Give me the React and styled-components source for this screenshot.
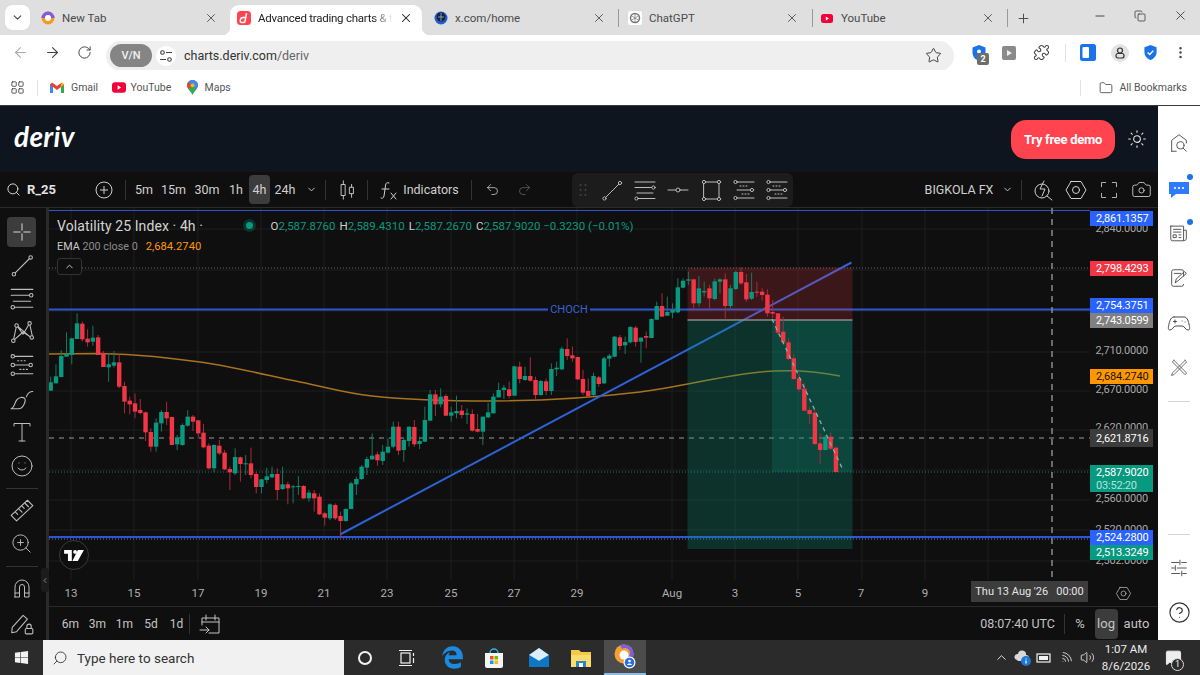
import React from "react";
import styled, { createGlobalStyle } from "styled-components";
import {
  ArrowLeft,
  ArrowRight,
  Camera,
  ChevronDown,
  ChevronLeft,
  ChevronUp,
  CircleHelp,
  Copy,
  Folder,
  LayoutGrid,
  Minus,
  MoreVertical,
  Plus,
  Puzzle,
  RotateCw,
  Search,
  Star,
  Sun,
  Undo2,
  Redo2,
  X,
  ZoomIn,
  Smile,
  Volume2,
  Wifi,
  MessageSquare,
} from "lucide-react";
import { FaEdgeLegacy, FaWindows } from "react-icons/fa";

const UI_FONT = `"Roboto", "Open Sans", sans-serif`;
const CHART_BG = "#0f0f0f";
const GREEN = "#089981";
const RED = "#f23645";

const GlobalStyle = createGlobalStyle`
  html, body { margin: 0; padding: 0; background: #fff; }
  * { box-sizing: border-box; }
  body { font-family: ${UI_FONT}; }
`;

const Page = styled.div`
  width: 1200px;
  height: 675px;
  display: flex;
  flex-direction: column;
  overflow: hidden;
`;

/* browser chrome */
const TabStrip = styled.div`
  height: 35px;
  background: #dfdfdf;
  display: flex;
  align-items: flex-end;
  padding-left: 5px;
  color: #444;
`;

const TabListButton = styled.div`
  width: 25px;
  height: 25px;
  margin: 0 3px 5px 0;
  background: #fff;
  border-radius: 8px;
  display: flex;
  align-items: center;
  justify-content: center;
  flex: none;
`;

const Tab = styled.div`
  width: ${(p) => p.$w}px;
  height: 30px;
  padding: 0 ${(p) => p.$pr || 12}px 4px ${(p) => p.$pl}px;
  display: flex;
  align-items: center;
  flex: none;
  font-size: 11.5px;
  color: ${(p) => (p.$active ? "#222" : "#4a4a4a")};
  background: ${(p) => (p.$active ? "#fff" : "transparent")};
  border-radius: 9px 9px 0 0;
  white-space: nowrap;
  position: relative;
  ${(p) =>
    p.$active &&
    `
    &::before, &::after {
      content: "";
      position: absolute;
      bottom: 0;
      width: 8px;
      height: 8px;
    }
    &::before { left: -8px; background: radial-gradient(circle at 0 0, #dfdfdf 8px, #fff 8.5px); }
    &::after { right: -8px; background: radial-gradient(circle at 100% 0, #dfdfdf 8px, #fff 8.5px); }
  `}
`;

const TabFavicon = styled.span`
  width: 14px;
  height: 14px;
  margin-right: 7px;
  flex: none;
  display: flex;
  align-items: center;
  justify-content: center;
`;

const TabTitle = styled.span`
  flex: 1;
  overflow: hidden;
  ${(p) =>
    p.$fade &&
    `letter-spacing: -0.25px; -webkit-mask-image: linear-gradient(90deg, #000 85%, transparent);`}
`;

const TabClose = styled(X)`
  flex: none;
  margin-left: ${(p) => (p.$gap ? 6 : 0)}px;
`;

const TabSep = styled.span`
  width: 1px;
  height: 18px;
  margin-bottom: 8px;
  background: #9a9a9a;
  flex: none;
`;

const NewTabButton = styled.span`
  width: 30px;
  height: 30px;
  padding-bottom: 4px;
  display: flex;
  align-items: center;
  justify-content: center;
  flex: none;
`;

const WindowControls = styled.div`
  margin-left: auto;
  display: flex;
  height: 35px;
  align-items: center;
  padding-bottom: 4px;
  color: #333;
`;

const WindowButton = styled.span`
  width: 40px;
  display: flex;
  justify-content: center;
`;

const AddressRow = styled.div`
  height: 35px;
  background: #fff;
  border-radius: 9px 9px 0 0;
  display: flex;
  align-items: center;
  color: #444;
`;

const NavButton = styled.span`
  width: 32px;
  margin-left: ${(p) => p.$ml || 0}px;
  display: flex;
  justify-content: center;
  color: ${(p) => p.$color || "#444"};
`;

const AddressPill = styled.div`
  width: 848px;
  height: 30px;
  margin: 6px 0 0 6px;
  border-radius: 15px;
  background: #efefef;
  display: flex;
  align-items: center;
  padding-left: 4px;
  font-size: 12.5px;
  color: #333;
`;

const VpnBadge = styled.span`
  width: 42px;
  height: 23px;
  border-radius: 12px;
  background: #858585;
  color: #f2f2f2;
  font-size: 11px;
  font-weight: 500;
  display: flex;
  align-items: center;
  justify-content: center;
`;

const SiteInfo = styled.span`
  width: 20px;
  height: 20px;
  margin: 0 8px 0 4px;
  border-radius: 50%;
  background: #fff;
  display: flex;
  align-items: center;
  justify-content: center;
`;

const UrlMuted = styled.span`
  color: #666;
`;

const StarSlot = styled.span`
  margin-left: auto;
  padding-right: 12px;
  display: flex;
`;

const ExtSlot = styled.span`
  width: ${(p) => p.$w || 32}px;
  margin-left: ${(p) => p.$ml || 0}px;
  display: flex;
  justify-content: center;
  position: relative;
`;

const ExtBadge = styled.span`
  position: absolute;
  right: 3px;
  top: 8px;
  width: 12px;
  height: 12px;
  border-radius: 2px;
  background: #6e6e6e;
  color: #fff;
  font-size: 9px;
  font-weight: 700;
  line-height: 12px;
  text-align: center;
`;

const ToolbarSep = styled.span`
  width: 1px;
  height: ${(p) => p.$h || 18}px;
  background: #e1e1e1;
  flex: none;
  margin: ${(p) => p.$m || "0"};
`;

const ProfileDot = styled.span`
  width: 18px;
  height: 18px;
  border-radius: 50%;
  background: #e3e3e3;
  display: flex;
  align-items: center;
  justify-content: center;
`;

const BookmarkRow = styled.div`
  height: 35px;
  padding: 0 13px 0 10px;
  background: #fff;
  display: flex;
  align-items: center;
  font-size: 10.5px;
  color: #555;
`;

const Bookmark = styled.span`
  width: ${(p) => p.$w}px;
  display: flex;
  align-items: center;
  gap: ${(p) => p.$gap || 7}px;
  flex: none;
`;

const AllBookmarks = styled.span`
  margin-left: auto;
  display: flex;
  align-items: center;
  gap: 6px;
`;

/* deriv page */
const Body = styled.div`
  flex: 1;
  display: flex;
  min-height: 0;
  border-top: 1px solid #3a3a3a;
`;

const Main = styled.div`
  width: 1158px;
  display: flex;
  flex-direction: column;
`;

const DerivHeader = styled.header`
  height: 66px;
  background: #0e151e;
  display: flex;
  align-items: center;
  padding-left: 14px;
`;

const DerivLogo = styled.span`
  font-family: "Lato", sans-serif;
  font-style: italic;
  font-weight: 700;
  font-size: 28px;
  color: #fff;
  letter-spacing: 0.3px;
  line-height: 1;
  margin-top: -6px;
`;

const DemoButton = styled.button`
  margin-left: auto;
  width: 104px;
  height: 39px;
  border: 0;
  border-radius: 15px;
  background: #ff444f;
  color: #fff;
  font-family: ${UI_FONT};
  font-weight: 700;
  font-size: 13px;
  letter-spacing: -0.3px;
`;

const ThemeToggle = styled.span`
  width: 43px;
  display: flex;
  justify-content: center;
  color: #e8e8e8;
`;

const ChartToolbar = styled.div`
  height: 35px;
  background: ${CHART_BG};
  display: flex;
  align-items: center;
  color: #d0d0d0;
  font-size: 12.5px;
  border-bottom: 1px solid #2a2a2a;
  box-sizing: content-box;
`;

const SymbolSearch = styled.div`
  width: 92px;
  padding-left: 6px;
  flex: none;
  display: flex;
  align-items: center;
  gap: 6px;
  font-weight: 700;
  color: #e2e2e2;
  font-size: 13px;
`;

const ToolSlot = styled.span`
  width: ${(p) => p.$w}px;
  height: 29px;
  margin: ${(p) => p.$m || "0"};
  display: flex;
  align-items: center;
  justify-content: center;
  flex: none;
  white-space: nowrap;
  border-radius: 4px;
  background: ${(p) => (p.$active ? "#3c3c3c" : "transparent")};
`;

const BarSep = styled.span`
  width: 1px;
  height: 20px;
  background: #333;
  flex: none;
  margin: ${(p) => p.$m || "0"};
`;

const DrawPalette = styled.div`
  width: 221px;
  height: 34px;
  margin-left: 36px;
  background: #1c1c1c;
  border-radius: 6px;
  display: flex;
  align-items: center;
  flex: none;
  padding-left: 5px;
  color: #bdbdbd;
`;

const PaletteGrip = styled.span`
  width: 11px;
  margin-right: 7px;
  display: flex;
  justify-content: center;
  color: #444;
`;

const PaletteSlot = styled.span`
  width: 33px;
  display: flex;
  justify-content: center;
`;

const Workspace = styled.div`
  flex: 1;
  display: flex;
  min-height: 0;
`;

const ToolRail = styled.aside`
  width: 49px;
  flex: none;
  padding: 9px 3px 0 0;
  background: ${CHART_BG};
  border-right: 3px solid #2a2a2a;
  display: flex;
  flex-direction: column;
  align-items: center;
  position: relative;
  color: #bdbdbd;
`;

const RailActive = styled.span`
  width: 29px;
  height: 30px;
  margin-bottom: 1px;
  border-radius: 4px;
  background: #3c3c3c;
  display: flex;
  align-items: center;
  justify-content: center;
  color: #e6e6e6;
`;

const RailItem = styled.span`
  height: ${(p) => p.$h || 33.5}px;
  display: flex;
  align-items: center;
  justify-content: center;
`;

const RailSep = styled.span`
  width: 32px;
  height: 1px;
  margin: 5px 0;
  background: #333;
  flex: none;
`;

const CollapseHandle = styled.span`
  position: absolute;
  right: -3px;
  top: 360px;
  width: 8px;
  height: 24px;
  background: #1c1c1c;
  border-radius: 3px;
  display: flex;
  align-items: center;
  justify-content: center;
  color: #bbb;
`;

const ChartColumn = styled.div`
  flex: 1;
  display: flex;
  flex-direction: column;
  min-width: 0;
  background: ${CHART_BG};
`;

const ChartCanvas = styled.div`
  height: 372px;
  position: relative;
  overflow: hidden;
`;

const ChartSvg = styled.svg`
  display: block;
`;

const Legend = styled.div`
  position: absolute;
  left: 8px;
  top: 7px;
  color: #d4d4d4;
`;

const LegendTop = styled.div`
  height: 21px;
  display: flex;
  align-items: center;
  font-size: 14px;
`;

const LegendTitle = styled.span`
  width: 188.5px;
  white-space: nowrap;
  letter-spacing: 0.1px;
`;

const LiveDot = styled.span`
  width: 7px;
  height: 7px;
  margin-right: 18px;
  border-radius: 50%;
  background: ${GREEN};
  box-shadow: 0 0 0 3px rgba(8, 153, 129, 0.25);
`;

const Ohlc = styled.span`
  font-size: 11.5px;
  color: ${GREEN};
  white-space: nowrap;
`;

const OhlcKey = styled.b`
  font-weight: 400;
  color: #cfcfcf;
  margin-left: ${(p) => (p.$first ? 0 : 4)}px;
`;

const EmaRow = styled.div`
  height: 20px;
  display: flex;
  align-items: center;
  gap: 8px;
  font-size: 10.8px;
  color: #8d8d8d;
`;

const EmaName = styled.span`
  color: #c9c9c9;
`;

const EmaValue = styled.span`
  color: #ff9800;
  font-size: 11.2px;
`;

const LegendToggle = styled.span`
  width: 25px;
  height: 17px;
  margin-top: 2px;
  border: 1px solid #333;
  border-radius: 3px;
  background: ${CHART_BG};
  display: flex;
  align-items: center;
  justify-content: center;
  color: #d0d0d0;
`;

const ChochLabel = styled.span`
  position: absolute;
  left: 499px;
  top: 94px;
  width: 42px;
  height: 15px;
  background: ${CHART_BG};
  color: #3b62d6;
  font-size: 11px;
  line-height: 15px;
  text-align: center;
`;

const TvBadge = styled.span`
  position: absolute;
  left: 10px;
  top: 332px;
  width: 30px;
  height: 30px;
  border-radius: 50%;
  border: 1px solid #3a3a3a;
  background: ${CHART_BG};
  display: flex;
  align-items: center;
  justify-content: center;
`;

const AxisLabel = styled.span`
  position: absolute;
  right: 10px;
  top: ${(p) => p.$y - 208 - 7}px;
  font-size: 11px;
  letter-spacing: -0.2px;
  line-height: 14px;
  color: #a8a8a8;
`;

const PriceTag = styled.span`
  position: absolute;
  right: 5px;
  top: ${(p) => p.$y - 208}px;
  width: 63px;
  height: ${(p) => p.$h || 15}px;
  padding-left: 6px;
  background: ${(p) => p.$bg};
  color: ${(p) => p.$fg || "#fff"};
  font-size: 11px;
  letter-spacing: -0.2px;
  line-height: 13px;
  display: flex;
  flex-direction: column;
  justify-content: center;
  align-items: flex-start;
`;

const TagSub = styled.span`
  color: #b6e3d9;
`;

const TimeAxis = styled.div`
  height: 27px;
  position: relative;
  border-bottom: 1px solid #2a2a2a;
  font-size: 11.5px;
  color: #b0b0b0;
`;

const TimeTick = styled.span`
  position: absolute;
  left: ${(p) => p.$x - 49}px;
  top: 6px;
  transform: translateX(-50%);
  line-height: 14px;
`;

const TimeCursor = styled.span`
  position: absolute;
  left: 922px;
  top: 1px;
  width: 117px;
  height: 21px;
  background: #3c3c3c;
  color: #e4e4e4;
  font-size: 11px;
  line-height: 21px;
  text-align: center;
  white-space: pre;
`;

const AxisSettings = styled.span`
  position: absolute;
  left: 1066px;
  top: 5px;
  color: #c4c4c4;
  display: flex;
`;

const RangeBar = styled.div`
  flex: 1;
  display: flex;
  align-items: center;
  padding-left: 8px;
  color: #c4c4c4;
  font-size: 12px;
`;

const RangeItem = styled.span`
  width: ${(p) => p.$w}px;
  text-align: center;
`;

const ClockText = styled.span`
  margin-left: auto;
  width: 76px;
  text-align: right;
  white-space: nowrap;
  font-size: 12.5px;
`;

const ScaleSwitch = styled.span`
  width: ${(p) => p.$w}px;
  height: 30px;
  margin: ${(p) => p.$m || "0"};
  border-radius: 4px;
  background: ${(p) => (p.$active ? "#3c3c3c" : "transparent")};
  display: flex;
  align-items: center;
  justify-content: center;
  font-size: 13px;
  flex: none;
`;

const SideBar = styled.aside`
  width: 42px;
  padding: 14px 0 5px;
  background: #fff;
  display: flex;
  flex-direction: column;
  align-items: center;
  color: #4a4a4a;
`;

const SideItem = styled.span`
  height: 45px;
  display: flex;
  align-items: center;
  justify-content: center;
  flex: none;
  position: relative;
`;

const SideDot = styled.span`
  position: absolute;
  top: 9px;
  right: -3px;
  width: 6px;
  height: 6px;
  border-radius: 50%;
  background: #1a73e8;
`;

const SideDivider = styled.span`
  width: 22px;
  height: 1px;
  background: #d5d5d5;
  flex: none;
  margin: ${(p) => (p.$bottom ? "auto 0 10px" : "11px 0 0")};
`;

/* taskbar */
const Taskbar = styled.footer`
  height: 35px;
  background: #2b2b2b;
  display: flex;
  align-items: center;
  color: #f2f2f2;
`;

const StartButton = styled.span`
  width: 43px;
  display: flex;
  justify-content: center;
`;

const SearchBox = styled.div`
  width: 301px;
  height: 35px;
  padding-left: 9px;
  background: #f1f1f1;
  color: #333;
  display: flex;
  align-items: center;
  gap: 9px;
  font-size: 13.5px;
`;

const SearchGlass = styled(Search)`
  transform: scaleX(-1);
`;

const TaskSlot = styled.span`
  width: ${(p) => p.$w || 42}px;
  margin-left: ${(p) => p.$ml || 0}px;
  height: 35px;
  display: flex;
  align-items: center;
  justify-content: center;
  flex: none;
  ${(p) =>
    p.$active &&
    `background: #4c4c4c; border-bottom: 2px solid #8fbde0;`}
`;

const TrayCluster = styled.div`
  margin-left: auto;
  display: flex;
  align-items: center;
`;

const TraySlot = styled.span`
  width: 21.5px;
  display: flex;
  justify-content: center;
`;

const WifiArc = styled(Wifi)`
  transform: rotate(45deg);
`;

const TrayClock = styled.span`
  width: 56px;
  font-size: 11.5px;
  line-height: 17px;
  text-align: center;
  color: #ececec;
  white-space: nowrap;
`;

const NotifySlot = styled.span`
  width: 30px;
  margin: 0 12px 0 4px;
  display: flex;
  justify-content: center;
  position: relative;
`;

const NotifyCount = styled.span`
  position: absolute;
  right: 4px;
  bottom: -5px;
  width: 13px;
  height: 13px;
  border: 1px solid #ddd;
  border-radius: 50%;
  background: #2b2b2b;
  font-size: 9px;
  line-height: 11px;
  text-align: center;
`;

/* small drawings */
const Glyph = ({ size = 24, box = 24, sw = 1, children }) => (
  <svg
    width={size}
    height={size}
    viewBox={`0 0 ${box} ${box}`}
    fill="none"
    stroke="currentColor"
    strokeWidth={sw}
    strokeLinecap="round"
    strokeLinejoin="round"
  >
    {children}
  </svg>
);

const Knob = ({ x, y, r = 1.6 }) => <circle cx={x} cy={y} r={r} fill={CHART_BG} />;

const LineTool = ({ size }) => (
  <Glyph size={size}>
    <path d="M5.5 19.5 19 6" />
    <Knob x={4.5} y={20.5} />
    <Knob x={20} y={5} />
  </Glyph>
);

const LinesTool = ({ size }) => (
  <Glyph size={size}>
    <path d="M2 4h20M2 9.5h17M4 15h16M5 20.5h17" />
    <Knob x={20.5} y={9.5} />
    <Knob x={3.5} y={20.5} />
  </Glyph>
);

const HLineTool = ({ size }) => (
  <Glyph size={size}>
    <path d="M2 12h8M14 12h8" />
    <Knob x={12} y={12} r={2} />
  </Glyph>
);

const RectTool = ({ size }) => (
  <Glyph size={size}>
    <rect x="5" y="4" width="15" height="17" />
    <Knob x={5} y={4} />
    <Knob x={20} y={4} />
    <Knob x={5} y={21} />
    <Knob x={20} y={21} />
  </Glyph>
);

const FibTool = ({ size, flip }) => (
  <Glyph size={size}>
    <path d="M5 4h17M5 12h15M6 20h16" />
    <path d="M8 8h8M10 16h8" strokeDasharray="1 2" />
    <Knob x={3.5} y={4} />
    <Knob x={flip ? 3.5 : 20} y={12} />
    <Knob x={3.5} y={20} />
    {flip && <Knob x={20} y={12} />}
  </Glyph>
);

const PatternTool = ({ size }) => (
  <Glyph size={size}>
    <path d="M4 20 7 6l6 8 6-10 3 14-9-6-9 8M7 6l12 10" />
    <Knob x={4} y={20} />
    <Knob x={7} y={6} />
    <Knob x={19} y={4} />
    <Knob x={21} y={17} />
  </Glyph>
);

const BrushTool = ({ size }) => (
  <Glyph size={size}>
    <path d="M2 21c3-1 3-5 5-8 2-3 6-3 7.500-1.500 1.500 2-1.500 9.500-5.500 9.500H2Z" />
    <path d="M16 10c1-3 3-5 6-5" />
  </Glyph>
);

const TextTool = ({ size }) => (
  <Glyph size={size}>
    <path d="M4 6V3.500h16V6M12 3.500V21M9 21h6" />
  </Glyph>
);

const RulerTool = ({ size }) => (
  <Glyph size={size}>
    <path d="M2 17 17 3l5 5L7 22Z" />
    <path d="m6 14 2 2M9 11l3 3M12 8.500l2 2M15 6l3 3" />
  </Glyph>
);

const MagnetTool = ({ size }) => (
  <Glyph size={size}>
    <path d="M5 21V11a7 7 0 0 1 14 0v10h-4.500V11a2.500 2.500 0 0 0-5 0v10H5Z" />
    <path d="M5 17h4.500M14.500 17H19" />
  </Glyph>
);

const PencilLock = ({ size }) => (
  <Glyph size={size}>
    <path d="m3 16 10-11 4 3.500L7 20l-4.500 1L3 16Z" />
    <rect x="15" y="17" width="7" height="5" rx="1" />
    <path d="M16.500 17v-2a2 2 0 0 1 4 0v2" />
  </Glyph>
);

const HexDot = ({ size }) => (
  <Glyph size={size}>
    <path d="M7 3.500h10l5 8.500-5 8.500H7L2 12l5-8.500Z" />
    <circle cx="12" cy="12" r="3.500" />
  </Glyph>
);

const CandleGlyph = () => (
  <Glyph size={22}>
    <rect x="6" y="6" width="4" height="12" />
    <path d="M8 2v4M8 18v4" />
    <rect x="15" y="9" width="4" height="7" />
    <path d="M17 6v3M17 16v4" />
  </Glyph>
);

const FxGlyph = () => (
  <Glyph size={24}>
    <path d="M12 5c-2-1-3 0-3.400 2L7 18c-.4 2-2 3-3 2M5 11h7" />
    <path d="m14 15 5 6M19 15l-5 6" />
  </Glyph>
);

const FlashSearch = () => (
  <Glyph size={24}>
    <circle cx="11" cy="13" r="7" />
    <path d="m16 18 5 4M13 3l-4 8h5l-3 7" />
  </Glyph>
);

const CalendarGlyph = () => (
  <Glyph size={24}>
    <path d="M4 13V6h17v15H11M4 10h17M8 3v5M17 3v5M2 18h9m-3-3 3 3-3 3" />
  </Glyph>
);

const SlidersGlyph = () => (
  <Glyph size={22}>
    <path d="M4 6h8M15 6h5M4 12h3M10 12h10M4 18h9M16 18h4M13 3.500v5M8 9.500v5M15 15.500v5" />
  </Glyph>
);

const NewsGlyph = () => (
  <Glyph size={22}>
    <path d="M3 4.500h14v16H5a2 2 0 0 1-2-2v-14ZM17 9h3v9.500a2 2 0 0 1-3 1.500" />
    <path d="M6 8h8M6 11h8" />
    <rect x="6" y="14" width="3" height="3" />
    <path d="M12 14h2M12 17h2" />
  </Glyph>
);

const NoteGlyph = () => (
  <Glyph size={22}>
    <path d="M17 10V5a2 2 0 0 0-2-2H6a2 2 0 0 0-2 2v14a2 2 0 0 0 2 2h9a2 2 0 0 0 2-2" />
    <path d="M7 7h7M8 17l1-4 9-8 2 2-9 8-3 2Z" />
  </Glyph>
);

const PadGlyph = () => (
  <Glyph size={24}>
    <path d="M7 6h10c3 0 4 3 5 7s1 6-1 6c-3 0-3-4-6-4H9c-3 0-3 4-6 4-2 0-2-2-1-6s2-7 5-7Z" />
    <path d="M8 9v3M6.500 10.500h3M15 10h.1M18 11h.1" />
  </Glyph>
);

const ToolsGlyph = () => (
  <Glyph size={19}>
    <path d="m5 3 16 16-2 2L3 5l2-2ZM19 3l2 2L5 21l-3 1 1-3L19 3Z" />
  </Glyph>
);

const HomeSearch = () => (
  <Glyph size={22}>
    <path d="M4 21V9l8-6 8 6v3" />
    <circle cx="13.500" cy="14.500" r="4" />
    <path d="m16.500 17.500 3.500 3.500" />
    <path d="M4 21h5" />
  </Glyph>
);

const ChatBlue = () => (
  <svg width="22" height="22" viewBox="0 0 22 22">
    <path d="M1 5h20v12H8l-5 4v-4H1V5Z" fill="#2f7bff" />
    <circle cx="7" cy="11" r="1.100" fill="#fff" />
    <circle cx="11" cy="11" r="1.100" fill="#fff" />
    <circle cx="15" cy="11" r="1.100" fill="#fff" />
  </svg>
);

const NewTabIcon = () => (
  <svg width="14" height="14" viewBox="0 0 14 14">
    <circle cx="7" cy="7" r="6.500" fill="#f59b23" />
    <path d="M7 .5a6.500 6.500 0 0 1 6.500 6.500H10A3 3 0 0 0 4 7H.5A6.500 6.500 0 0 1 7 .5Z" fill="#7b5de8" />
    <circle cx="7" cy="7" r="3" fill="#fff" />
  </svg>
);

const DerivIcon = () => (
  <svg width="14" height="14" viewBox="0 0 14 14">
    <rect width="14" height="14" rx="3.500" fill="#ff444f" />
    <path d="M9.500 2 8 10.500c-.2 1-.8 1-2 1H5c-1.500 0-2-1-1.700-2.300C3.600 7.500 4.500 6.500 6 6.500h2.500" fill="none" stroke="#fff" strokeWidth="1.500" />
  </svg>
);

const GlobeIcon = () => (
  <svg width="14" height="14" viewBox="0 0 14 14">
    <circle cx="7" cy="7" r="6.500" fill="#1f5fd0" />
    <circle cx="7" cy="6" r="4.500" fill="#1b2230" />
    <path d="M4 6h6M7 2v8" stroke="#9db6e8" strokeWidth="0.800" />
  </svg>
);

const GptIcon = () => (
  <svg width="14" height="14" viewBox="0 0 14 14">
    <rect width="14" height="14" rx="2" fill="#fff" />
    <circle cx="7" cy="7" r="4.500" fill="none" stroke="#777" strokeWidth="1.500" />
    <path d="M7 2.500v9M3 4.500l8 5M11 4.500l-8 5" stroke="#777" strokeWidth="0.700" />
  </svg>
);

const YtIcon = ({ w = 12, h = 9 }) => (
  <svg width={w} height={h} viewBox="0 0 12 9">
    <rect width="12" height="9" rx="2.500" fill="#f2023a" />
    <path d="m4.800 2.500 3 2-3 2v-4Z" fill="#fff" />
  </svg>
);

const GmailIcon = () => (
  <svg width="14" height="11" viewBox="0 0 14 11">
    <path d="M0 2.500V11h3V5l4 3 4-3v6h3V2.500L12 .5 7 4 2 .5 0 2.500Z" fill="#ea4335" />
    <path d="M0 2.500V11h3V5L0 2.500Z" fill="#4285f4" />
    <path d="M11 5v6h3V2.500L11 5Z" fill="#34a853" />
    <path d="m12 .5 2 2L11 5V2.500L12 .5Z" fill="#fbbc04" />
  </svg>
);

const MapsIcon = () => (
  <svg width="11" height="15" viewBox="0 0 11 15">
    <path d="M5.500 0C2.500 0 0 2.300 0 5.300 0 9 4 11.500 5.500 15 7 11.500 11 9 11 5.300 11 2.300 8.500 0 5.500 0Z" fill="#34a853" />
    <path d="M5.500 0C3.800 0 2.300.8 1.300 2l7.600 7c1.100-1.200 2.100-2.300 2.100-3.700C11 2.300 8.500 0 5.500 0Z" fill="#4285f4" />
    <path d="M1.300 2C.5 3 0 4 0 5.300c0 1.500.7 2.800 1.600 3.900L5 5.300 1.300 2Z" fill="#ea4335" />
    <circle cx="5.500" cy="5.300" r="1.900" fill="#fbbc04" />
  </svg>
);

const ShieldBlue = ({ check, size = 16 }) => (
  <svg width={size} height={size} viewBox="0 0 16 16">
    <path d="M8 0 14.500 2.500v5C14.500 11.500 12 14.500 8 16 4 14.500 1.500 11.500 1.500 7.500v-5L8 0Z" fill="#1a73e8" />
    {check ? (
      <path d="m5 8 2.200 2.200L11 6" fill="none" stroke="#fff" strokeWidth="1.500" />
    ) : (
      <circle cx="8" cy="6.500" r="2" fill="#fff" />
    )}
  </svg>
);

const SiteTune = () => (
  <svg width="14" height="14" viewBox="0 0 14 14" fill="none" stroke="#444" strokeWidth="1.100">
    <circle cx="3.500" cy="3.500" r="1.800" />
    <path d="M7 3.500h6M1 10.500h6" />
    <circle cx="10.500" cy="10.500" r="1.800" />
  </svg>
);

const StoreIcon = () => (
  <svg width="22" height="22" viewBox="0 0 22 22">
    <path d="M7 6a4 4 0 0 1 8 0" fill="none" stroke="#29b6e8" strokeWidth="1.500" />
    <path d="M2 6h18v13a2 2 0 0 1-2 2H4a2 2 0 0 1-2-2V6Z" fill="#f4f4f4" />
    <rect x="7" y="9" width="3.500" height="3.500" fill="#f25022" />
    <rect x="11.500" y="9" width="3.500" height="3.500" fill="#7fba00" />
    <rect x="7" y="13.500" width="3.500" height="3.500" fill="#00a4ef" />
    <rect x="11.500" y="13.500" width="3.500" height="3.500" fill="#ffb900" />
  </svg>
);

const MailIcon = () => (
  <svg width="22" height="22" viewBox="0 0 22 22">
    <path d="M11 1 21 8v12H1V8l10-7Z" fill="#1a8fdc" />
    <path d="m1 8 10 6 10-6-10-7L1 8Z" fill="#d8eefb" />
    <path d="M1 20V8l10 6 10-6v12H1Z" fill="#0e76c4" />
  </svg>
);

const FilesIcon = () => (
  <svg width="22" height="22" viewBox="0 0 22 22">
    <path d="M1 3h8l2 2h10v15H1V3Z" fill="#f7c948" />
    <rect x="1" y="8" width="20" height="12" fill="#fcdc6c" />
    <rect x="6" y="14" width="10" height="6" fill="#2b86c8" />
    <rect x="9" y="16" width="4" height="4" fill="#fff" />
  </svg>
);

const AppIcon = () => (
  <svg width="24" height="26" viewBox="0 0 24 26">
    <circle cx="11" cy="10" r="9.500" fill="#f5a030" />
    <path d="M11 .5a9.500 9.500 0 0 1 9 12.500H15a5 5 0 0 0-6-8l-2-4a9.500 9.500 0 0 1 4-.5Z" fill="#7c5fe6" />
    <circle cx="11" cy="11" r="4.500" fill="#fff" />
    <circle cx="16.500" cy="18.500" r="6" fill="#fff" />
    <circle cx="16.500" cy="18.500" r="4.800" fill="#2a6fdb" />
    <circle cx="16.500" cy="17" r="1.300" fill="#fff" />
    <path d="M14 21c.3-2 4.700-2 5 0h-5Z" fill="#fff" />
  </svg>
);

const TaskViewIcon = () => (
  <svg width="18" height="18" viewBox="0 0 18 18" fill="none" stroke="#f2f2f2" strokeWidth="1.200">
    <rect x="3" y="4" width="9" height="10" />
    <path d="M1 1.500h13M1 16.500h13M15.500 4v3M15.500 9v5" />
  </svg>
);

const CloudIcon = () => (
  <svg width="18" height="18" viewBox="0 0 18 18">
    <path d="M3 11a3 3 0 0 1 1-6 4 4 0 0 1 8 1 3 3 0 0 1 0 6H4l-1-1Z" fill="#d8d8d8" />
    <circle cx="12" cy="12" r="5" fill="#1c78d2" />
    <path d="M12 9.500v1M12 11.500v3" stroke="#fff" strokeWidth="1.200" />
  </svg>
);

const BatteryIcon = () => (
  <svg width="16" height="12" viewBox="0 0 16 12" fill="none" stroke="#f2f2f2" strokeWidth="1.200">
    <rect x="1" y="2" width="13" height="8" />
    <rect x="3" y="4" width="9" height="4" fill="#f2f2f2" stroke="none" />
  </svg>
);

const TvMark = () => (
  <svg width="20" height="11" viewBox="0 0 36 20" fill="#fff">
    <path d="M0 0h14v20H7V7H0V0Z" />
    <circle cx="20" cy="3.500" r="3.500" />
    <path d="M15 20 25 0h11l-11 20H15Z" />
  </svg>
);

/* chart data: pixel positions read off the chart */
const SPACING = 5.27;
const FIRST_X = 50.7;

// [up, wickTop, bodyTop, bodyBottom, wickBottom] at 3x, measured from y=275
const candlesA = [
  [1,305,322,347,348],[1,268,304,325,325],[1,225,243,306,307],[1,172,237,245,245],[1,188,190,240,268],
  [1,115,145,192,192],[0,140,146,193,200],[0,163,191,202,215],[1,152,188,200,212],[0,180,187,240,240],
  [0,228,235,276,276],[1,235,268,277,320],[1,228,262,272,278],[0,238,262,335,340],[0,320,333,380,415],
  [0,365,377,388,418],[0,355,385,410,430],[0,372,405,414,418],[0,410,412,472,498],[0,460,471,515,530],
  [1,430,443,515,530],[1,405,411,445,470],[0,380,411,430,450],[0,425,426,510,510],[1,480,487,508,525],
  [1,445,450,510,512],[1,405,425,452,455],[0,420,425,440,468],[0,435,436,475,490],[0,447,473,517,520],
  [0,505,512,580,583],[1,508,510,580,592],[0,495,512,535,540],[0,525,533,583,585],[0,575,582,592,645],
  [1,520,546,595,600],[0,545,547,567,620],[1,540,565,568,600],[0,518,565,600,610],[0,590,597,636,655],
  [1,612,613,636,655],[1,578,604,615,625],[1,575,597,607,610],[0,580,597,645,675],[1,575,628,642,645],
  [0,620,628,640,688],[1,630,634,636,685],[1,603,633,636,660],[0,630,633,670,672],[1,645,653,670,680],
  [0,645,655,670,710],[0,655,665,718,720],[0,710,715,728,752],[1,685,688,730,735],[0,685,690,730,735],
  [0,710,723,738,790],[1,700,702,738,740],[1,620,625,702,702],[1,605,612,628,660],[1,570,575,612,615],
  [1,545,552,578,600],[1,475,542,553,555],[0,530,538,556,572],[1,510,530,558,570],[1,490,515,533,535],
  [1,440,455,515,520],[0,440,455,527,540],
];

// same layout, measured from y=250
const candlesB = [
  [1,565,570,600,635],[1,530,530,573,590],[0,510,531,583,590],[1,560,573,582,597],[1,470,510,575,575],
  [1,420,433,512,512],[0,420,433,463,498],[1,415,440,463,472],[0,432,438,497,498],[1,470,487,497,515],
  [1,437,483,490,505],[0,465,482,495,505],[1,475,490,494,522],[0,478,492,542,545],[0,492,537,545,547],
  [1,500,500,545,585],[1,458,487,502,505],[1,430,440,490,490],[1,398,420,442,442],[1,405,413,420,447],
  [0,395,418,438,445],[1,347,349,437,437],[0,335,350,387,400],[1,350,378,390,392],[0,322,378,392,395],
  [0,380,390,435,450],[1,390,393,435,437],[0,385,394,423,435],[1,340,357,423,435],[1,335,353,358,378],
  [1,290,296,358,360],[0,265,297,318,330],[0,290,316,325,335],[0,320,321,388,390],[0,360,387,428,435],
  [0,385,423,438,440],[1,368,378,435,438],[0,378,382,402,410],[1,320,325,400,402],[1,312,317,326,350],
  [1,258,260,320,322],[0,255,262,288,300],[1,260,276,286,312],[1,228,231,277,280],[0,228,233,276,290],
  [1,262,263,275,338],[0,245,258,263,295],[1,205,207,264,265],[1,155,168,209,210],[0,130,168,200,200],
  [1,140,186,197,198],[1,160,180,188,205],[1,85,112,187,190],[1,85,92,113,115],[1,65,88,92,105],
  [0,88,88,160,178],[1,78,115,160,170],[1,95,123,127,140],[0,105,115,145,175],[1,85,94,147,150],
  [1,85,88,95,130],[0,70,88,168,205],[1,105,115,168,178],[1,62,66,117,120],[0,52,66,100,105],
  [0,72,97,148,155],[1,68,126,146,150],[0,95,125,128,140],[0,115,125,135,152],[0,118,134,190,200],
  [0,150,186,191,205],[0,190,190,248,255],[0,200,245,277,280],[0,265,277,327,330],[0,312,325,387,390],
  [0,370,385,418,425],[0,398,416,482,482],[0,470,480,492,522],[0,480,488,582,585],[0,550,580,600,642],
  [1,555,560,600,600],[0,547,560,596,600],[0,590,593,666,668],
];

const candles = [
  ...candlesA.map((c) => [c[0], ...c.slice(1).map((v) => 275 + v / 3)]),
  ...candlesB.map((c) => [c[0], ...c.slice(1).map((v) => 250 + v / 3)]),
];

const gridX = [71, 134, 198, 261, 324, 387, 451, 514, 577, 672, 735, 798, 862, 925, 988];
const gridY = [229, 270, 311, 352, 391, 430, 470, 500, 530, 561];

const emaPath =
  "M49 354 L100 353.500 C140 354 170 358 200 362 C235 367 270 376 300 382 C330 388 345 393 372 396 C400 399 440 401 490 401 C540 401 590 398 640 392 C680 387 720 376 760 372 C785 369.500 810 370 840 376";

const trendPath = "M340 534.500 L851.500 262.500";

function ChartDrawing() {
  return (
    <ChartSvg width="1109" height="372" viewBox="49 208 1109 372">
      {gridX.map((x) => (
        <line key={x} x1={x} x2={x} y1="208" y2="580" stroke="#1f1f1f" />
      ))}
      {gridY.map((y) => (
        <line key={y} x1="49" x2="1090" y1={y} y2={y} stroke="#1f1f1f" />
      ))}

      <line x1="49" x2="1090" y1="210.500" y2="210.500" stroke="#2f56c4" />
      <line x1="49" x2="1090" y1="268" y2="268" stroke="#666" strokeDasharray="1 2" />
      <line x1="49" x2="1090" y1="309.500" y2="309.500" stroke="#2f56d2" strokeWidth="2" />
      <line x1="49" x2="1090" y1="438" y2="438" stroke="#9a9a9a" strokeDasharray="5 5" />
      <line x1="49" x2="1090" y1="472" y2="472" stroke="#1d7a69" strokeDasharray="1 2" />
      <line x1="49" x2="1090" y1="537" y2="537" stroke="#2f56d2" strokeWidth="2" />
      <line x1="49" x2="1090" y1="539" y2="539" stroke="#5b7fe0" strokeDasharray="1 2" />
      <line x1="1052" x2="1052" y1="208" y2="580" stroke="#8a8a8a" strokeWidth="1.500" strokeDasharray="6 5" />

      <path d={emaPath} fill="none" stroke="#a8731f" strokeWidth="1.500" />
      <path d={trendPath} fill="none" stroke="#2d62d8" strokeWidth="2" />

      <rect x="687.500" y="267.500" width="165" height="52.500" fill="rgba(242,54,69,0.2)" />
      <rect x="687.500" y="320" width="165" height="229" fill="rgba(8,153,129,0.25)" />
      <rect x="772" y="320" width="80.500" height="152" fill="rgba(8,153,129,0.2)" />
      <line x1="687.500" x2="852.500" y1="320" y2="320" stroke="#8a8a8a" strokeWidth="1.500" />

      {candles.map(([up, wickTop, bodyTop, bodyBottom, wickBottom], i) => {
        const x = FIRST_X + SPACING * i;
        const color = up ? GREEN : RED;
        return (
          <g key={i}>
            <line x1={x} x2={x} y1={wickTop} y2={wickBottom} stroke={up ? "#18785f" : "#a82b3a"} />
            <rect x={x - 2.200} y={bodyTop} width="4.400" height={Math.max(bodyBottom - bodyTop, 1)} fill={color} />
          </g>
        );
      })}

      <path d="M772 319 L843 470" fill="none" stroke="#7fb5a8" strokeWidth="1.300" strokeDasharray="4 4" />
    </ChartSvg>
  );
}

const axisPrices = [
  ["2,840.0000", 229],
  ["2,710.0000", 351],
  ["2,670.0000", 390],
  ["2,620.0000", 428],
  ["2,560.0000", 499],
  ["2,520.0000", 530],
  ["2,502.0000", 561],
];

const priceTags = [
  { text: "2,861.1357", y: 211, bg: "#2962ff" },
  { text: "2,798.4293", y: 261, bg: "#f23645" },
  { text: "2,754.3751", y: 298, bg: "#2962ff" },
  { text: "2,743.0599", y: 313, bg: "#808080" },
  { text: "2,684.2740", y: 369, bg: "#ff9800", fg: "#1c1206" },
  { text: "2,621.8716", y: 429, h: 18, bg: "#3c3c3c" },
  { text: "2,524.2800", y: 530, bg: "#2962ff" },
  { text: "2,513.3249", y: 545, bg: GREEN },
];

const timeTicks = [
  ["13", 71], ["15", 134], ["17", 198], ["19", 261], ["21", 324], ["23", 387], ["25", 451],
  ["27", 514], ["29", 577], ["Aug", 672], ["3", 735], ["5", 798], ["7", 861], ["9", 925],
];

function BrowserChrome() {
  return (
    <>
      <TabStrip>
        <TabListButton>
          <ChevronDown size={13} strokeWidth={2} />
        </TabListButton>
        <Tab $w={197} $pl={8}>
          <TabFavicon><NewTabIcon /></TabFavicon>
          <TabTitle>New Tab</TabTitle>
          <TabClose size={14} strokeWidth={1.500} />
        </Tab>
        <Tab $w={192} $active $pl={7} $pr={9}>
          <TabFavicon><DerivIcon /></TabFavicon>
          <TabTitle $fade>Advanced trading charts &amp; technical</TabTitle>
          <TabClose $gap size={14} strokeWidth={1.800} />
        </Tab>
        <Tab $w={196} $pl={12}>
          <TabFavicon><GlobeIcon /></TabFavicon>
          <TabTitle>x.com/home</TabTitle>
          <TabClose size={14} strokeWidth={1.500} />
        </Tab>
        <TabSep />
        <Tab $w={193} $pl={9} $pr={13}>
          <TabFavicon><GptIcon /></TabFavicon>
          <TabTitle>ChatGPT</TabTitle>
          <TabClose size={14} strokeWidth={1.500} />
        </Tab>
        <TabSep />
        <Tab $w={194} $pl={7}>
          <TabFavicon><YtIcon /></TabFavicon>
          <TabTitle>YouTube</TabTitle>
          <TabClose size={14} strokeWidth={1.500} />
        </Tab>
        <TabSep />
        <NewTabButton>
          <Plus size={15} strokeWidth={1.500} />
        </NewTabButton>
        <WindowControls>
          <WindowButton><Minus size={14} strokeWidth={1.500} /></WindowButton>
          <WindowButton><Copy size={12} strokeWidth={1.500} /></WindowButton>
          <WindowButton><X size={15} strokeWidth={1.300} /></WindowButton>
        </WindowControls>
      </TabStrip>

      <AddressRow>
        <NavButton $color="#aaa" $ml={4}><ArrowLeft size={17} strokeWidth={1.500} /></NavButton>
        <NavButton><ArrowRight size={17} strokeWidth={1.500} /></NavButton>
        <NavButton><RotateCw size={15} strokeWidth={1.600} /></NavButton>
        <AddressPill>
          <VpnBadge>V/N</VpnBadge>
          <SiteInfo><SiteTune /></SiteInfo>
          charts.deriv.com<UrlMuted>/deriv</UrlMuted>
          <StarSlot><Star size={17} strokeWidth={1.300} /></StarSlot>
        </AddressPill>
        <ExtSlot $w={26} $ml={12}>
          <ShieldBlue />
          <ExtBadge>2</ExtBadge>
        </ExtSlot>
        <ExtSlot $ml={1}><svg width="14" height="14" viewBox="0 0 14 14"><rect width="14" height="14" rx="2" fill="#8a8a8a" /><path d="m5 4 5 3-5 3V4Z" fill="#eee" /></svg></ExtSlot>
        <ExtSlot><Puzzle size={17} strokeWidth={1.500} /></ExtSlot>
        <ToolbarSep $m="0 0 0 8px" />
        <ExtSlot $w={44}><svg width="16" height="17" viewBox="0 0 16 17"><rect width="16" height="17" rx="2.500" fill="#1a73e8" /><rect x="2.500" y="3" width="6.500" height="11" rx="1" fill="#fff" /></svg></ExtSlot>
        <ExtSlot $w={20}><ProfileDot><svg width="10" height="12" viewBox="0 0 10 12" fill="none" stroke="#333" strokeWidth="1.200"><circle cx="5" cy="3.500" r="2.500" /><rect x="1" y="6.500" width="8" height="4.500" rx="2" /></svg></ProfileDot></ExtSlot>
        <ExtSlot $w={40}><ShieldBlue check size={15} /></ExtSlot>
        <ExtSlot $w={20}><MoreVertical size={15} strokeWidth={2} /></ExtSlot>
      </AddressRow>

      <BookmarkRow>
        <LayoutGrid size={15} strokeWidth={1.400} color="#444" />
        <ToolbarSep $m="0 12px 0 12px" $h={16} />
        <Bookmark $w={61.500}><GmailIcon /> Gmail</Bookmark>
        <Bookmark $w={75} $gap={5}><YtIcon w={14} h={11} /> YouTube</Bookmark>
        <Bookmark $w={50}><MapsIcon /> Maps</Bookmark>
        <AllBookmarks>
          <ToolbarSep $h={16} $m="0 12px 0 0" />
          <Folder size={14} strokeWidth={1.400} color="#444" />
          All Bookmarks
        </AllBookmarks>
      </BookmarkRow>
    </>
  );
}

function TopToolbar() {
  return (
    <ChartToolbar>
      <SymbolSearch>
        <Search size={15} strokeWidth={1.500} />
        R_25
      </SymbolSearch>
      <ToolSlot $w={24}>
        <svg width="18" height="18" viewBox="0 0 18 18" fill="none" stroke="currentColor"><circle cx="9" cy="9" r="8" /><path d="M9 5v8M5 9h8" /></svg>
      </ToolSlot>
      <BarSep $m="0 4px 0 9px" />
      <ToolSlot $w={28}>5m</ToolSlot>
      <ToolSlot $w={31}>15m</ToolSlot>
      <ToolSlot $w={36}>30m</ToolSlot>
      <ToolSlot $w={22}>1h</ToolSlot>
      <ToolSlot $w={21} $m="0 0 0 2px" $active>4h</ToolSlot>
      <ToolSlot $w={30}>24h</ToolSlot>
      <ToolSlot $w={22}><ChevronDown size={11} /></ToolSlot>
      <BarSep $m="0 3px 0 3px" />
      <ToolSlot $w={35}><CandleGlyph /></ToolSlot>
      <BarSep $m="0 7px 0 3px" />
      <ToolSlot $w={27}><FxGlyph /></ToolSlot>
      <ToolSlot $w={56} $m="0 0 0 1px">Indicators</ToolSlot>
      <BarSep $m="0 8px 0 12px" />
      <ToolSlot $w={24}><Undo2 size={15} strokeWidth={1.200} /></ToolSlot>
      <ToolSlot $w={24} $m="0 0 0 8px"><Redo2 size={15} strokeWidth={1.200} color="#666" /></ToolSlot>
      <DrawPalette>
        <PaletteGrip>
          <svg width="8" height="14" viewBox="0 0 8 14" fill="currentColor"><circle cx="1.500" cy="2" r="1" /><circle cx="6.500" cy="2" r="1" /><circle cx="1.500" cy="7" r="1" /><circle cx="6.500" cy="7" r="1" /><circle cx="1.500" cy="12" r="1" /><circle cx="6.500" cy="12" r="1" /></svg>
        </PaletteGrip>
        <PaletteSlot><LineTool /></PaletteSlot>
        <PaletteSlot><LinesTool /></PaletteSlot>
        <PaletteSlot><HLineTool /></PaletteSlot>
        <PaletteSlot><RectTool /></PaletteSlot>
        <PaletteSlot><FibTool /></PaletteSlot>
        <PaletteSlot><FibTool flip /></PaletteSlot>
      </DrawPalette>
      <ToolSlot $w={72} $m="0 0 0 auto">BIGKOLA FX</ToolSlot>
      <ToolSlot $w={22} $m="0 0 0 1px"><ChevronDown size={11} /></ToolSlot>
      <BarSep $m="0 4px 0 3px" />
      <ToolSlot $w={33}><FlashSearch /></ToolSlot>
      <ToolSlot $w={33}><HexDot size={24} /></ToolSlot>
      <ToolSlot $w={33}>
        <Glyph size={20}><path d="M3 8V3h5M16 3h5v5M21 16v5h-5M8 21H3v-5" /></Glyph>
      </ToolSlot>
      <ToolSlot $w={33}><Camera size={21} strokeWidth={1} /></ToolSlot>
    </ChartToolbar>
  );
}

function LeftRail() {
  return (
    <ToolRail>
      <RailActive>
        <Glyph size={22}><path d="M12 3v7M12 14v7M3 12h7M14 12h7" /></Glyph>
      </RailActive>
      <RailItem><LineTool size={26} /></RailItem>
      <RailItem><LinesTool size={26} /></RailItem>
      <RailItem><PatternTool size={26} /></RailItem>
      <RailItem><FibTool size={26} flip /></RailItem>
      <RailItem><BrushTool size={26} /></RailItem>
      <RailItem><TextTool size={24} /></RailItem>
      <RailItem><Smile size={24} strokeWidth={1} /></RailItem>
      <RailSep />
      <RailItem><RulerTool size={26} /></RailItem>
      <RailItem><ZoomIn size={23} strokeWidth={1} /></RailItem>
      <RailSep />
      <RailItem><MagnetTool size={24} /></RailItem>
      <RailItem $h={35}><PencilLock size={26} /></RailItem>
      <CollapseHandle><ChevronLeft size={9} /></CollapseHandle>
    </ToolRail>
  );
}

function ChartPanel() {
  return (
    <ChartColumn>
      <ChartCanvas>
        <ChartDrawing />
        {axisPrices.map(([text, y]) => (
          <AxisLabel key={text} $y={y}>{text}</AxisLabel>
        ))}
        {priceTags.map((tag) => (
          <PriceTag key={tag.text} $y={tag.y} $h={tag.h} $bg={tag.bg} $fg={tag.fg}>
            {tag.text}
          </PriceTag>
        ))}
        <PriceTag $y={465} $h={27} $bg={GREEN}>
          2,587.9020
          <TagSub>03:52:20</TagSub>
        </PriceTag>
        <Legend>
          <LegendTop>
            <LegendTitle>Volatility 25 Index · 4h ·</LegendTitle>
            <LiveDot />
            <Ohlc>
              <OhlcKey $first>O</OhlcKey>2,587.8760
              <OhlcKey>H</OhlcKey>2,589.4310
              <OhlcKey>L</OhlcKey>2,587.2670
              <OhlcKey>C</OhlcKey>2,587.9020 −0.3230 (−0.01%)
            </Ohlc>
          </LegendTop>
          <EmaRow>
            <span><EmaName>EMA</EmaName> 200 close 0</span>
            <EmaValue>2,684.2740</EmaValue>
          </EmaRow>
          <LegendToggle><ChevronUp size={11} /></LegendToggle>
        </Legend>
        <ChochLabel>CHOCH</ChochLabel>
        <TvBadge><TvMark /></TvBadge>
      </ChartCanvas>

      <TimeAxis>
        {timeTicks.map(([label, x]) => (
          <TimeTick key={label} $x={x}>{label}</TimeTick>
        ))}
        <TimeCursor>{"Thu 13 Aug '26   00:00"}</TimeCursor>
        <AxisSettings><HexDot size={17} /></AxisSettings>
      </TimeAxis>

      <RangeBar>
        <RangeItem $w={27}>6m</RangeItem>
        <RangeItem $w={27}>3m</RangeItem>
        <RangeItem $w={27}>1m</RangeItem>
        <RangeItem $w={26}>5d</RangeItem>
        <RangeItem $w={25}>1d</RangeItem>
        <BarSep $m="0 8px 0 0" />
        <CalendarGlyph />
        <ClockText>08:07:40 UTC</ClockText>
        <BarSep $m="0 4px 0 9px" />
        <ScaleSwitch $w={22}>%</ScaleSwitch>
        <ScaleSwitch $w={23} $m="0 0 0 3.500px" $active>log</ScaleSwitch>
        <ScaleSwitch $w={32} $m="0 5.500px 0 3px">auto</ScaleSwitch>
      </RangeBar>
    </ChartColumn>
  );
}

function RightSidebar() {
  return (
    <SideBar>
      <SideItem><HomeSearch /></SideItem>
      <SideItem><ChatBlue /><SideDot /></SideItem>
      <SideItem><NewsGlyph /><SideDot /></SideItem>
      <SideItem><NoteGlyph /></SideItem>
      <SideItem><PadGlyph /></SideItem>
      <SideItem><ToolsGlyph /></SideItem>
      <SideDivider />
      <SideDivider $bottom />
      <SideItem><SlidersGlyph /></SideItem>
      <SideItem><CircleHelp size={23} strokeWidth={1.200} color="#333" /></SideItem>
    </SideBar>
  );
}

function WindowsTaskbar() {
  return (
    <Taskbar>
      <StartButton><FaWindows size={15} /></StartButton>
      <SearchBox>
        <SearchGlass size={16} strokeWidth={1.300} />
        Type here to search
      </SearchBox>
      <TaskSlot><svg width="16" height="16" viewBox="0 0 16 16" fill="none" stroke="#f2f2f2" strokeWidth="2"><circle cx="8" cy="8" r="6" /></svg></TaskSlot>
      <TaskSlot><TaskViewIcon /></TaskSlot>
      <TaskSlot $w={49}><FaEdgeLegacy size={23} color="#1c8ae0" /></TaskSlot>
      <TaskSlot $w={34}><StoreIcon /></TaskSlot>
      <TaskSlot $w={56}><MailIcon /></TaskSlot>
      <TaskSlot $w={28}><FilesIcon /></TaskSlot>
      <TaskSlot $ml={8.600} $w={42.400} $active><AppIcon /></TaskSlot>
      <TrayCluster>
        <TraySlot><ChevronUp size={15} strokeWidth={1.400} /></TraySlot>
        <TraySlot><CloudIcon /></TraySlot>
        <TraySlot><BatteryIcon /></TraySlot>
        <TraySlot><WifiArc size={14} strokeWidth={1.300} /></TraySlot>
        <TraySlot><Volume2 size={15} strokeWidth={1.300} /></TraySlot>
        <TrayClock>1:07 AM<br />8/6/2026</TrayClock>
        <NotifySlot>
          <MessageSquare size={17} strokeWidth={1.300} fill="#eee" />
          <NotifyCount>1</NotifyCount>
        </NotifySlot>
      </TrayCluster>
    </Taskbar>
  );
}

export default function App() {
  return (
    <Page>
      <GlobalStyle />
      <BrowserChrome />
      <Body>
        <Main>
          <DerivHeader>
            <DerivLogo>deriv</DerivLogo>
            <DemoButton>Try free demo</DemoButton>
            <ThemeToggle><Sun size={20} strokeWidth={1.300} /></ThemeToggle>
          </DerivHeader>
          <TopToolbar />
          <Workspace>
            <LeftRail />
            <ChartPanel />
          </Workspace>
        </Main>
        <RightSidebar />
      </Body>
      <WindowsTaskbar />
    </Page>
  );
}
